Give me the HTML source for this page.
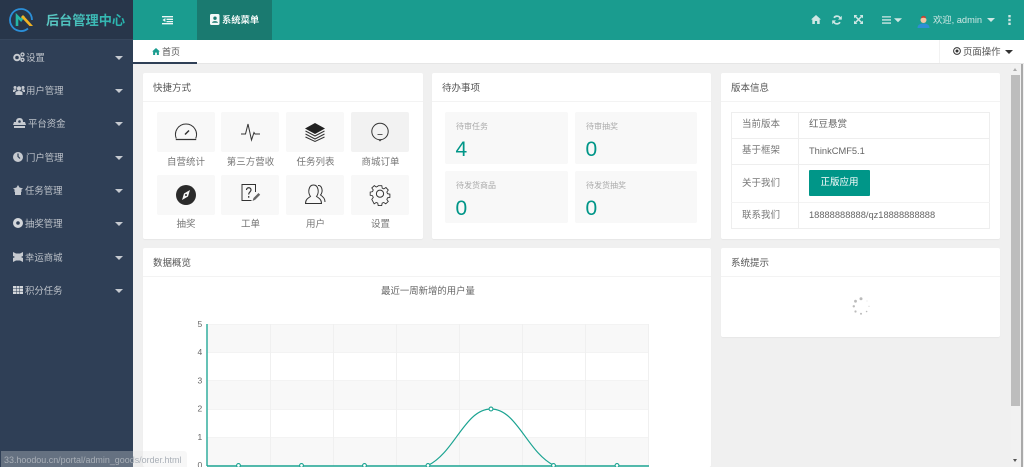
<!DOCTYPE html>
<html><head><meta charset="utf-8">
<style>
html,body{margin:0;padding:0;width:1024px;height:467px;overflow:hidden;background:#f0f0f0}
body{position:relative;font-family:"Liberation Sans","Noto Sans CJK SC",sans-serif;color:#666;font-size:9.5px}
#w{position:absolute;left:0;top:0;width:1024px;height:467px;filter:blur(.25px)}
.a,.card,.t,.m,.n,.tile,.td,.ar{position:absolute}
.t{white-space:nowrap;line-height:14px}
.side{left:0;top:0;width:133px;height:467px;background:#2f3f56}
.m{left:26px;color:#bfc4cb;font-size:9.4px;line-height:14px;white-space:nowrap}
.ar{left:115px;width:0;height:0;border-left:4px solid transparent;border-right:4px solid transparent;border-top:4px solid #c6cad0}
.card{background:#fff;border-radius:2px;box-shadow:0 1px 1px rgba(0,0,0,.04)}
.hd{position:absolute;left:0;right:0;top:0;height:28px;border-bottom:1px solid #f3f3f3;line-height:32px;padding-left:10px;font-size:9.5px;color:#555}
.tile{width:58px;height:40px;background:#f8f8f8;border-radius:2px}
.lbl{position:absolute;width:65px;text-align:center;font-size:9.5px;line-height:14px;color:#777}
.td{background:#f8f8f8;border-radius:2px;height:52px}
.td b{position:absolute;left:11px;top:9px;font-weight:normal;font-size:8px;line-height:12px;color:#aaa;white-space:nowrap}
.td i{position:absolute;left:10.5px;top:25px;font-style:normal;font-size:21px;line-height:26px;color:#009688}
svg{position:absolute;overflow:visible}
.k{fill:none;stroke:#333;stroke-width:1}
</style></head><body><div id="w">

<!-- top bar -->
<div class="a" style="left:133px;top:0;width:891px;height:40px;background:#1a9c8f"></div>
<div class="a" style="left:197px;top:0;width:75px;height:40px;background:#1a7a70"></div>
<svg style="left:162px;top:15px" width="11" height="10" viewBox="0 0 11 10"><path d="M0 1h11v1.400H0zM4.500 3.600H11V5H4.500zM4.500 6H11v1.300H4.500zM0 8h11v1.400H0zM3.400 3v4L.4 5z" fill="#eef7f6"/></svg>
<svg style="left:210px;top:14px" width="10" height="11" viewBox="0 0 10 11"><rect x="0" y="0" width="9.500" height="11" rx="1.500" fill="#f2f8f7"/><circle cx="5" cy="4.200" r="1.700" fill="#1a7a70"/><path d="M2 8.800c.4-2.200 5.600-2.200 6 0z" fill="#1a7a70"/></svg>
<div class="t" style="left:222px;top:13px;color:#f2f8f7;font-size:9.300px;font-weight:bold">系统菜单</div>

<svg style="left:811px;top:15px" width="10" height="9" viewBox="0 0 10 9"><path d="M5 0L0 4.500h1.300V9h2.600V6h2.200v3h2.600V4.500H10z" fill="#cfe7e4"/></svg>
<svg style="left:832px;top:15px" width="10" height="10" viewBox="0 0 10 10"><path d="M8.400 3.500A3.600 3.600 0 0 0 2 2.800M1.600 6.500A3.600 3.600 0 0 0 8 7.200" fill="none" stroke="#cfe7e4" stroke-width="1.700"/><path d="M9.800 .8v3.800H6zM.2 9.200V5.400H4z" fill="#cfe7e4"/></svg>
<svg style="left:854px;top:15px" width="9" height="9" viewBox="0 0 9 9"><path d="M1.500 1.500l6 6M7.500 1.500l-6 6" stroke="#cfe7e4" stroke-width="1.500"/><path d="M0 0h3.400L0 3.400zM9 0v3.400L5.600 0zM0 9V5.600L3.400 9zM9 9H5.600L9 5.600z" fill="#cfe7e4"/></svg>
<svg style="left:882px;top:16px" width="21" height="8" viewBox="0 0 21 8"><path d="M0 .2h9v1.300H0zM0 3.300h9v1.300H0zM0 6.400h9v1.300H0z" fill="#cfe7e4"/><path d="M12 2.200h8l-4 4z" fill="#cfe7e4"/></svg>
<svg style="left:917px;top:14px" width="13" height="14" viewBox="0 0 13 14"><path d="M.5 14c0-3.500 3-4.500 6-4.500s6 1 6 4.500z" fill="#2d8fd6"/><circle cx="6.500" cy="6" r="3" fill="#f3c6a2"/><path d="M4 4.500C4 1 9 1 9 4.500 7.500 3.500 5.500 3.500 4 4.500z" fill="#c8402e"/></svg>
<div class="t" style="left:933px;top:13px;color:#cfe7e4;font-size:9.300px">欢迎, admin</div>
<div class="ar" style="left:986.500px;top:18px;border-top-color:#cfe7e4"></div>
<svg style="left:1008px;top:15px" width="3" height="10" viewBox="0 0 3 10"><rect x=".3" y="0" width="2.400" height="2.400" fill="#cfe7e4"/><rect x=".3" y="3.800" width="2.400" height="2.400" fill="#cfe7e4"/><rect x=".3" y="7.600" width="2.400" height="2.400" fill="#cfe7e4"/></svg>

<!-- sidebar -->
<div class="a side"></div>
<div class="a" style="left:0;top:0;width:133px;height:40px;background:#28364a;border-bottom:1px solid #36465c;box-sizing:border-box"></div>
<svg style="left:9px;top:8px" width="25" height="25" viewBox="0 0 25 25"><path d="M19 20.500A11 11 0 1 1 23 12" fill="none" stroke="#2b8fd8" stroke-width="1.800"/><path d="M8 18V8l4 4 3-4" fill="none" stroke="#25b5a5" stroke-width="2.600"/><path d="M14 7l10 11h-3.500L12 9z" fill="#f0b323"/></svg>
<div class="t" style="left:46px;top:12px;font-size:13.200px;line-height:17px;font-weight:bold;background:linear-gradient(90deg,#5cc6c2,#27b3ad);-webkit-background-clip:text;background-clip:text;color:transparent">后台管理中心</div>

<svg style="left:13px;top:52px" width="12" height="10" viewBox="0 0 12 10"><circle cx="4" cy="5.500" r="2.800" fill="none" stroke="#c6cad0" stroke-width="2"/><circle cx="9.500" cy="2.500" r="1.500" fill="none" stroke="#c6cad0" stroke-width="1.300"/><circle cx="9.500" cy="7.800" r="1.500" fill="none" stroke="#c6cad0" stroke-width="1.300"/></svg>
<div class="m" style="top:50.500px">设置</div><div class="ar" style="top:55.500px"></div>

<svg style="left:13px;top:85px" width="12" height="10" viewBox="0 0 12 10"><circle cx="6" cy="3.500" r="2.200" fill="#c6cad0"/><circle cx="2" cy="2.500" r="1.500" fill="#c6cad0"/><circle cx="10" cy="2.500" r="1.500" fill="#c6cad0"/><path d="M2.500 10V7.500C3 5.500 9 5.500 9.500 7.500V10zM0 7V5.500C.3 4 3 4 3.500 5L1.500 7zM12 7V5.500C11.700 4 9 4 8.500 5L10.500 7z" fill="#c6cad0"/></svg>
<div class="m" style="top:83.500px">用户管理</div><div class="ar" style="top:88.500px"></div>

<svg style="left:13px;top:118px" width="13" height="10" viewBox="0 0 13 10"><path d="M6.500 0C3.500 0 3 2 3 4H1L0 7h13l-1-3h-2c0-2-.5-4-3.500-4zM1 8h11v2H1z" fill="#c6cad0"/><circle cx="6.500" cy="3.500" r="1.300" fill="#2f3f56"/></svg>
<div class="m" style="top:116.500px;left:28px">平台资金</div><div class="ar" style="top:121.500px"></div>

<svg style="left:13px;top:152px" width="10" height="10" viewBox="0 0 10 10"><circle cx="5" cy="5" r="5" fill="#c6cad0"/><path d="M5 1.500v3l2 2" stroke="#2f3f56" stroke-width="1.200" fill="none"/></svg>
<div class="m" style="top:150.500px">门户管理</div><div class="ar" style="top:155.500px"></div>

<svg style="left:13px;top:185px" width="10" height="10" viewBox="0 0 10 10"><path d="M5 0l1.500 2.500L10 3.500 8 5l1 1-1 1v3H2V7L1 6l1-1L0 3.500l3.500-1z" fill="#c6cad0"/></svg>
<div class="m" style="top:183.500px;left:25px">任务管理</div><div class="ar" style="top:188.500px"></div>

<svg style="left:13px;top:218px" width="10" height="10" viewBox="0 0 10 10"><circle cx="5" cy="5" r="5" fill="#d4d7db"/><circle cx="5" cy="5" r="1.800" fill="#2f3f56"/></svg>
<div class="m" style="top:216.500px;left:25px">抽奖管理</div><div class="ar" style="top:221.500px"></div>

<svg style="left:13px;top:252px" width="10" height="10" viewBox="0 0 10 10"><path d="M0 0l3 1.500h4L10 0v4L8 5l2 1v4L7 8.500H3L0 10V6l2-1-2-1z" fill="#c6cad0"/></svg>
<div class="m" style="top:250.500px;left:25px">幸运商城</div><div class="ar" style="top:255.500px"></div>

<svg style="left:13px;top:286px" width="10" height="8" viewBox="0 0 10 8"><path d="M0 0h3v2.300H0zM3.500 0h3v2.300h-3zM7 0h3v2.300H7zM0 2.800h3v2.300H0zM3.500 2.800h3v2.300h-3zM7 2.800h3v2.300H7zM0 5.600h3V8H0zM3.500 5.600h3V8h-3zM7 5.600h3V8H7z" fill="#d4d7db"/></svg>
<div class="m" style="top:283.500px;left:25px">积分任务</div><div class="ar" style="top:288.500px"></div>

<!-- tab bar -->
<div class="a" style="left:133px;top:40px;width:891px;height:23px;background:#fff;border-bottom:1px solid #e6e6e6"></div>
<div class="a" style="left:133px;top:62px;width:64px;height:1.500px;background:#2f3f56"></div>
<svg style="left:152px;top:48px" width="8" height="7" viewBox="0 0 10 9"><path d="M5 0L0 4.500h1.300V9h2.600V6h2.200v3h2.600V4.500H10z" fill="#1a9c8f"/></svg>
<div class="t" style="left:162px;top:44.500px;color:#555;font-size:9px">首页</div>
<div class="a" style="left:939px;top:40px;width:1px;height:23px;background:#f2f2f2"></div>
<svg style="left:953px;top:47px" width="8" height="8" viewBox="0 0 8 8"><circle cx="4" cy="4" r="3.400" fill="none" stroke="#333" stroke-width="1"/><circle cx="4" cy="4" r="1.500" fill="#333"/></svg>
<div class="t" style="left:963px;top:44.500px;color:#555;font-size:9.400px">页面操作</div>
<div class="ar" style="left:1005px;top:49.500px;border-top-color:#333"></div>

<!-- quick card -->
<div class="card" style="left:143px;top:73px;width:280px;height:166px">
 <div class="hd">快捷方式</div>
 <div class="tile" style="left:14px;top:39px"></div><div class="tile" style="left:78px;top:39px"></div><div class="tile" style="left:143px;top:39px"></div><div class="tile" style="left:208px;top:39px;background:#f2f2f2"></div>
 <div class="tile" style="left:14px;top:102px"></div><div class="tile" style="left:78px;top:102px"></div><div class="tile" style="left:143px;top:102px"></div><div class="tile" style="left:208px;top:102px"></div>
 <div class="lbl" style="left:10.500px;top:82.500px">自营统计</div><div class="lbl" style="left:75px;top:82.500px">第三方营收</div><div class="lbl" style="left:140px;top:82.500px">任务列表</div><div class="lbl" style="left:205px;top:82.500px">商城订单</div>
 <div class="lbl" style="left:10.500px;top:144.500px">抽奖</div><div class="lbl" style="left:75px;top:144.500px">工单</div><div class="lbl" style="left:140px;top:144.500px">用户</div><div class="lbl" style="left:205px;top:144.500px">设置</div>
</div>
<svg style="left:175px;top:123px" width="22" height="18" viewBox="0 0 22 18"><path class="k" d="M1.300 15.500A10.500 10.500 0 1 1 20.700 15.500"/><path d="M.8 16.500h20.400" stroke="#333" stroke-width="1.200"/><path d="M10 11.500l4-4" stroke="#333" stroke-width="1.500"/></svg>
<svg style="left:241px;top:123px" width="19" height="18" viewBox="0 0 19 18"><path class="k" d="M0 11h4.500L7 1l3.500 16L13 9.500l1 1.500h5"/></svg>
<svg style="left:305px;top:122px" width="20" height="20" viewBox="0 0 20 20"><path d="M10 1l10 5.500-10 5.500L0 6.500z" fill="#222"/><path d="M.5 9l9.500 5 9.500-5M.5 12l9.500 5 9.500-5M.5 15l9.500 4.500 9.500-4.500" fill="none" stroke="#333" stroke-width="1"/></svg>
<svg style="left:371px;top:123px" width="18" height="20" viewBox="0 0 18 20"><circle class="k" cx="9" cy="8.500" r="8.200"/><path d="M6.500 11.500h5" stroke="#333" stroke-width=".8"/><path d="M7.800 16.800L9 18l1.200-1.200" fill="none" stroke="#333" stroke-width=".7"/></svg>
<svg style="left:176px;top:185px" width="20" height="20" viewBox="0 0 20 20"><circle cx="10" cy="10" r="10" fill="#2b2b2b"/><path d="M14 5l-2 6.500L6 15l2-6.500z" fill="#f8f8f8"/><circle cx="10" cy="10" r="1" fill="#2b2b2b"/></svg>
<svg style="left:241px;top:184px" width="20" height="20" viewBox="0 0 20 20"><path class="k" d="M14.500 8V.5H1V16.500h9.500"/><path d="M5.500 6C5.500 3 10 3 10 6c0 2-2.300 2-2.300 4.500M7.700 12v1.700" fill="none" stroke="#333" stroke-width="1.200"/><path d="M11.500 17l1-3 5-5 1.700 1.700-5 5z" fill="#666"/></svg>
<svg style="left:305px;top:184px" width="21" height="20" viewBox="0 0 21 20"><path class="k" d="M.5 19.500c0-4 2.500-5.500 5-7-3-4-2-11.500 3-11.500s6 7.500 3 11.500c2.500 1.500 5 3 5 7z"/><path class="k" d="M13 1.500c4-.5 5.500 6 2.500 9.500 2.500 1.500 4.500 3.500 4.500 7" stroke="#777"/></svg>
<svg style="left:370px;top:184px" width="20" height="20" viewBox="0 0 20 20"><path class="k" d="M8 .8h4l.5 2.700 1.800.8 2.300-1.500 2.600 2.800-1.600 2.200.8 1.900 2.600.5v3.500l-2.600.5-.8 1.900 1.600 2.200-2.800 2.600-2.200-1.500-1.800.7-.5 2.700H8l-.5-2.700-1.800-.7-2.200 1.500L.9 16l1.600-2.200-.8-1.900-2.600-.5V7.900l2.600-.5.800-1.900L.9 3.300l2.800-2.600 2.100 1.500 1.700-.7z" transform="translate(1 1) scale(.9)"/><circle class="k" cx="10" cy="9.700" r="3.600"/></svg>

<!-- todo card -->
<div class="card" style="left:432px;top:73px;width:279px;height:166px">
 <div class="hd">待办事项</div>
 <div class="td" style="left:13px;top:39px;width:123px"><b>待审任务</b><i>4</i></div>
 <div class="td" style="left:143px;top:39px;width:122px"><b>待审抽奖</b><i>0</i></div>
 <div class="td" style="left:13px;top:98px;width:123px"><b>待发货商品</b><i>0</i></div>
 <div class="td" style="left:143px;top:98px;width:122px"><b>待发货抽奖</b><i>0</i></div>
</div>

<!-- version card -->
<div class="card" style="left:721px;top:73px;width:279px;height:166px">
 <div class="hd">版本信息</div>
 <div class="a" style="left:10px;top:39px;width:259px;height:117px;box-sizing:border-box;border:1px solid #eee"></div>
 <div class="a" style="left:10px;top:65px;width:259px;height:1px;background:#eee"></div>
 <div class="a" style="left:10px;top:91px;width:259px;height:1px;background:#eee"></div>
 <div class="a" style="left:10px;top:129px;width:259px;height:1px;background:#f3f3f3"></div>
 <div class="a" style="left:77px;top:39px;width:1px;height:117px;background:#eee"></div>
 <div class="t" style="left:21px;top:45px;color:#777">当前版本</div><div class="t" style="left:88px;top:45px;color:#666">红豆悬赏</div>
 <div class="t" style="left:21px;top:71px;color:#777">基于框架</div><div class="t" style="left:88px;top:70.500px;color:#666;font-size:9.300px">ThinkCMF5.1</div>
 <div class="t" style="left:21px;top:103.500px;color:#777">关于我们</div>
 <div class="a" style="left:88px;top:97px;width:61px;height:26px;background:#009688;border-radius:1px;color:#fff;text-align:center;line-height:26px;font-size:9.500px">正版应用</div>
 <div class="t" style="left:21px;top:135.500px;color:#777">联系我们</div><div class="t" style="left:88px;top:134.500px;color:#666;font-size:9.300px">18888888888/qz18888888888</div>
</div>

<!-- data card -->
<div class="card" style="left:143px;top:248px;width:568px;height:219px">
 <div class="hd">数据概览</div>
 <div class="t" style="left:1px;width:568px;text-align:center;top:36px;color:#666;font-size:9.400px">最近一周新增的用户量</div>
</div>
<svg style="left:0;top:0" width="1024" height="467" viewBox="0 0 1024 467">
 <rect x="207" y="324" width="442" height="28.400" fill="#f8f8f8"/>
 <rect x="207" y="380.500" width="442" height="28.500" fill="#f8f8f8"/>
 <rect x="207" y="437" width="442" height="29" fill="#f8f8f8"/>
 <path d="M207 324.500H649M207 352.500H649M207 380.500H649M207 409.500H649M207 437.500H649" stroke="#f3f3f3" fill="none"/>
 <path d="M270.500 324V466M333.500 324V466M396.500 324V466M459.500 324V466M522.500 324V466M585.500 324V466M648.500 324V466" stroke="#f0f0f0" fill="none"/>
 <path d="M207 324V466" stroke="#3fb3a4" stroke-width="1.600"/>
 <path d="M207 466H649" stroke="#1aa391" stroke-width="1.500"/>
 <path d="M428 465.500C455 452 465 409 491 409C517 409 527 452 554 465.500" stroke="#1aa391" stroke-width="1.200" fill="none"/>
 <g fill="#fff" stroke="#1aa391" stroke-width="1.100"><circle cx="238.500" cy="465.500" r="1.900"/><circle cx="301.500" cy="465.500" r="1.900"/><circle cx="364.500" cy="465.500" r="1.900"/><circle cx="428" cy="465.500" r="1.900"/><circle cx="491" cy="409" r="1.900"/><circle cx="553.500" cy="465.500" r="1.900"/><circle cx="617" cy="465.500" r="1.900"/></g>
 <g font-family="Liberation Sans" font-size="8.500" fill="#666"><text x="197.500" y="327">5</text><text x="197.500" y="355">4</text><text x="197.500" y="383.500">3</text><text x="197.500" y="411.500">2</text><text x="197.500" y="440">1</text><text x="197.500" y="468">0</text></g>
</svg>

<!-- system card -->
<div class="card" style="left:721px;top:248px;width:279px;height:89px">
 <div class="hd">系统提示</div>
</div>
<svg style="left:851px;top:297px" width="20" height="20" viewBox="0 0 20 20" fill="#bbb"><circle cx="10" cy="1.800" r="1.500"/><circle cx="4.500" cy="4.200" r="1.400"/><circle cx="2.800" cy="9.300" r="1.200"/><circle cx="4.500" cy="14.500" r="1.100"/><circle cx="10" cy="16.800" r="1"/><circle cx="15.600" cy="14.500" r=".8"/><circle cx="18" cy="9.300" r=".5"/><circle cx="16" cy="4" r=".4"/></svg>

<!-- scrollbar -->
<div class="a" style="left:1011px;top:64px;width:13px;height:403px;background:#f1f1f1"></div>
<div class="a" style="left:1011px;top:75px;width:9px;height:331px;background:#bdbdbd"></div>
<div class="a" style="left:1021px;top:64px;width:1.500px;height:403px;background:#a9a9a9"></div>
<div class="a" style="left:1013px;top:68px;width:0;height:0;border-left:2.500px solid transparent;border-right:2.500px solid transparent;border-bottom:3px solid #aaa"></div>
<div class="a" style="left:1013px;top:459px;width:0;height:0;border-left:2.500px solid transparent;border-right:2.500px solid transparent;border-top:3px solid #555"></div>

<!-- status bubble -->
<div class="a" style="left:1px;top:451px;width:186px;height:16px;background:rgba(228,228,228,.3);border-radius:0 3px 0 0"></div>
<div class="t" style="left:4px;top:452.500px;font-size:8.950px;color:#a9afb7">33.hoodou.cn/portal/admin_goods/order.html</div>
</div></body></html>
